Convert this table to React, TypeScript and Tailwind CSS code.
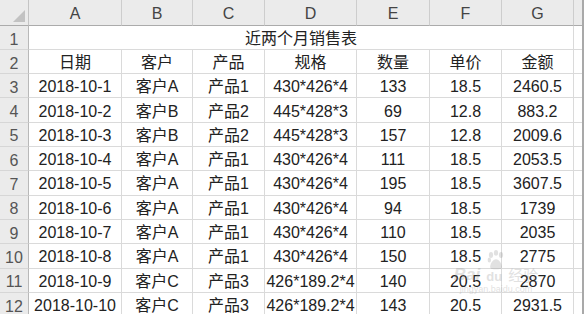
const columns = ["A", "B", "C", "D", "E", "F", "G"];

const rows = [
  ["2018-10-1", "客户A", "产品1", "430*426*4", "133", "18.5", "2460.5"],
  ["2018-10-2", "客户B", "产品2", "445*428*3", "69", "12.8", "883.2"],
  ["2018-10-3", "客户B", "产品2", "445*428*3", "157", "12.8", "2009.6"],
  ["2018-10-4", "客户A", "产品1", "430*426*4", "111", "18.5", "2053.5"],
  ["2018-10-5", "客户A", "产品1", "430*426*4", "195", "18.5", "3607.5"],
  ["2018-10-6", "客户A", "产品1", "430*426*4", "94", "18.5", "1739"],
  ["2018-10-7", "客户A", "产品1", "430*426*4", "110", "18.5", "2035"],
  ["2018-10-8", "客户A", "产品1", "430*426*4", "150", "18.5", "2775"],
  ["2018-10-9", "客户C", "产品3", "426*189.2*4", "140", "20.5", "2870"],
  ["2018-10-10", "客户C", "产品3", "426*189.2*4", "143", "20.5", "2931.5"],
];

const headers = ["日期", "客户", "产品", "规格", "数量", "单价", "金额"];

const font = {
  fontFamily: '"Liberation Sans", "Noto Sans CJK SC", sans-serif',
};

function RowNum({ n, h }: { n: number; h: string }) {
  return (
    <div
      className={`${h} flex items-center justify-center border-r border-b border-r-[#b8b8b8] border-b-[#d6d6d6] bg-[#ebebeb] pt-[4px] text-[16px] text-[#555]`}
    >
      {n}
    </div>
  );
}

function Cell({ text, h }: { text: string; h: string }) {
  return (
    <div
      className={`${h} flex items-center justify-center border-r border-b border-[#dadada] pt-[3px] text-[16px] text-[#222] whitespace-nowrap`}
    >
      {text}
    </div>
  );
}

export default function App() {
  return (
    <div
      className="relative h-[314px] w-[584px] overflow-hidden bg-[#a9a9a9]"
      style={font}
    >
      <div className="grid w-[582px] grid-cols-[29px_93px_71px_72px_92px_73px_72px_72px_1fr] bg-white">
        {/* column letters */}
        <div className="relative h-[26px] border-r border-b border-r-[#c4c4c4] border-b-[#ababab] bg-[#ebebeb]">
          <svg
            className="absolute right-[3px] bottom-[3px]"
            width="12"
            height="12"
            viewBox="0 0 12 12"
          >
            <polygon points="12,0 12,12 0,12" fill="#c2c2c2" />
          </svg>
        </div>
        {columns.map((c) => (
          <div
            key={c}
            className="flex h-[26px] items-center justify-center border-r border-b border-r-[#cdcdcd] border-b-[#ababab] bg-[#ebebeb] pt-[3px] text-[16px] text-[#444]"
          >
            {c}
          </div>
        ))}
        <div className="h-[26px] border-b border-b-[#ababab] bg-[#ebebeb]" />

        {/* row 1: title */}
        <RowNum n={1} h="h-[24px]" />
        <div className="col-span-7 flex h-[24px] items-center justify-center border-r border-b border-[#dadada] pt-[3px] text-[16px] text-[#222]">
          近两个月销售表
        </div>
        <div className="h-[24px] border-b border-[#dadada]" />

        {/* row 2: headers */}
        <RowNum n={2} h="h-[24px]" />
        {headers.map((t) => (
          <Cell key={t} text={t} h="h-[24px]" />
        ))}
        <div className="h-[24px] border-b border-[#dadada]" />

        {rows.map((r, i) => (
          <div key={i} className="contents">
            <RowNum n={i + 3} h="h-[24.33px]" />
            {r.map((t, j) => (
              <Cell key={j} text={t} h="h-[24.33px]" />
            ))}
            <div className="h-[24.33px] border-b border-[#dadada]" />
          </div>
        ))}
      </div>

      {/* watermark */}
      <div className="pointer-events-none absolute top-[250px] left-[444px] flex w-[104px] flex-col items-center opacity-25">
        <svg width="26" height="20" viewBox="0 0 22 24" fill="#8a8a8a">
          <ellipse cx="5" cy="6" rx="2.5" ry="3.5" />
          <ellipse cx="11" cy="3.5" rx="2.5" ry="3.5" />
          <ellipse cx="17" cy="6" rx="2.5" ry="3.5" />
          <ellipse cx="3" cy="12" rx="2" ry="3" />
          <path d="M11 11c-4 0-7 6-7 9s3 3 7 3 7 0 7-3-3-9-7-9z" />
        </svg>
        <div className="-mt-[4px] flex items-end gap-[6px] text-[#8a8a8a]">
          <span className="text-[17px] font-bold italic leading-none">Bai</span>
          <span className="text-[13px] font-bold leading-none">du</span>
          <span className="text-[15px] leading-none">经验</span>
        </div>
        <span className="mt-[2px] text-[9px] leading-none text-[#8a8a8a]">
          jingyan.baidu.com
        </span>
      </div>
    </div>
  );
}
